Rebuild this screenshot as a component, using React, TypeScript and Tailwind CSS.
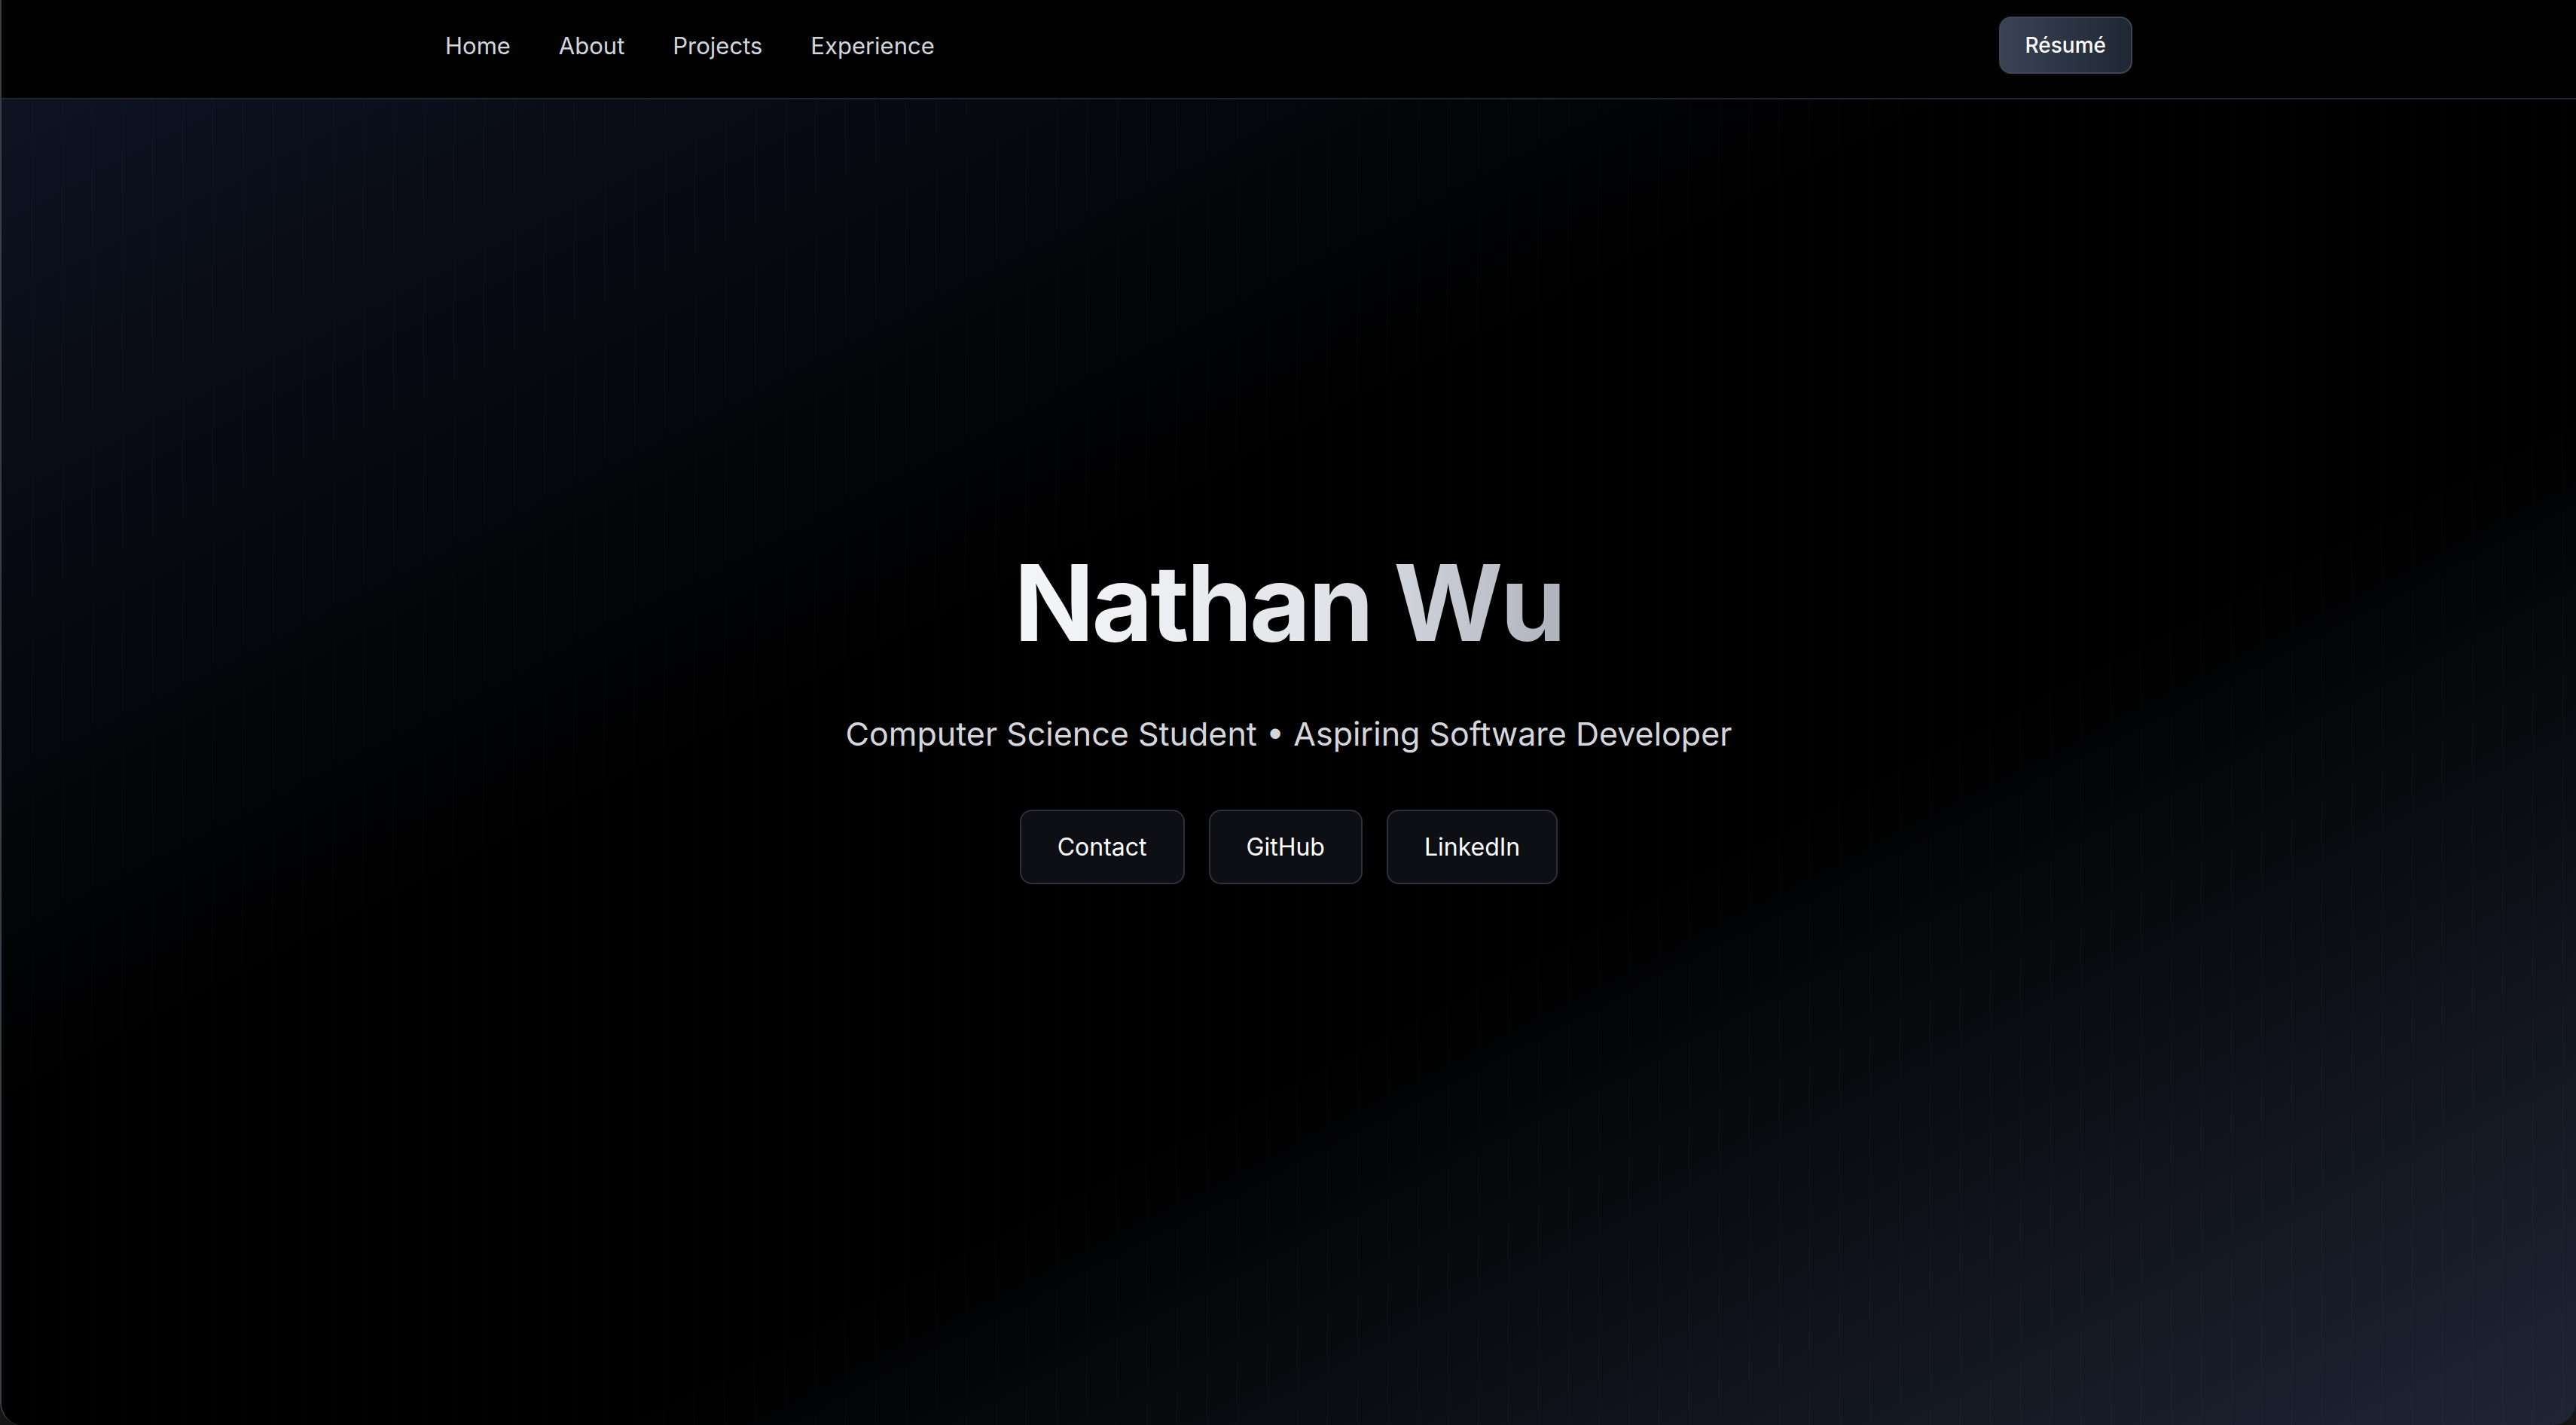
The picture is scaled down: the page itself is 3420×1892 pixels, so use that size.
import React from 'react';

const navLinks = ['Home', 'About', 'Projects', 'Experience'];
const heroLinks = ['Contact', 'GitHub', 'LinkedIn'];

const App: React.FC = () => {
  return (
    <div className="w-full h-screen bg-[#151515] font-['Inter','Noto_Sans',sans-serif]">
      <div className="flex flex-col h-full bg-black border-l-2 border-[#3a3d44] rounded-b-[30px] overflow-hidden">
        {/* Nav */}
        <nav className="h-[132px] shrink-0 bg-[#020203] border-b-2 border-[#1f2430]">
          <div className="max-w-[2304px] mx-auto px-8 pt-[22px] flex items-center justify-between">
            <div className="flex items-center gap-16">
              {navLinks.map((link) => (
                <a key={link} className="text-[31px] text-gray-300 leading-none cursor-pointer">
                  {link}
                </a>
              ))}
            </div>
            <button className="h-[76px] px-[33px] rounded-2xl border-2 border-[#3f4653] bg-[linear-gradient(to_right,#394354,#1f2735)] text-[28px] font-medium text-white">
              Résumé
            </button>
          </div>
        </nav>

        {/* Hero */}
        <section className="flex-1 flex flex-col items-center pt-[598px] bg-[linear-gradient(90deg,rgba(255,255,255,0.018)_1px,transparent_1px),linear-gradient(to_bottom_right,#0e1322,#000000_38%,#000000_62%,#1f2535)] bg-[size:40px_100%,100%_100%]">
          <h1 className="text-[140px] font-bold leading-none tracking-tight bg-[linear-gradient(to_right,#f5f6f8,#e3e5ea_55%,#aeb2bc)] bg-clip-text text-transparent">
            Nathan Wu
          </h1>
          <p className="mt-[76px] text-[43px] leading-[56px] text-[#d4d6dc]">
            Computer Science Student • Aspiring Software Developer
          </p>
          <div className="mt-[73px] flex items-center gap-8">
            {heroLinks.map((link) => (
              <a
                key={link}
                className="h-[99px] px-[48px] flex items-center rounded-2xl border-2 border-[#2c313c] bg-[#0d0f14] text-[32px] text-white cursor-pointer"
              >
                {link}
              </a>
            ))}
          </div>
        </section>
      </div>
    </div>
  );
};

export default App;
